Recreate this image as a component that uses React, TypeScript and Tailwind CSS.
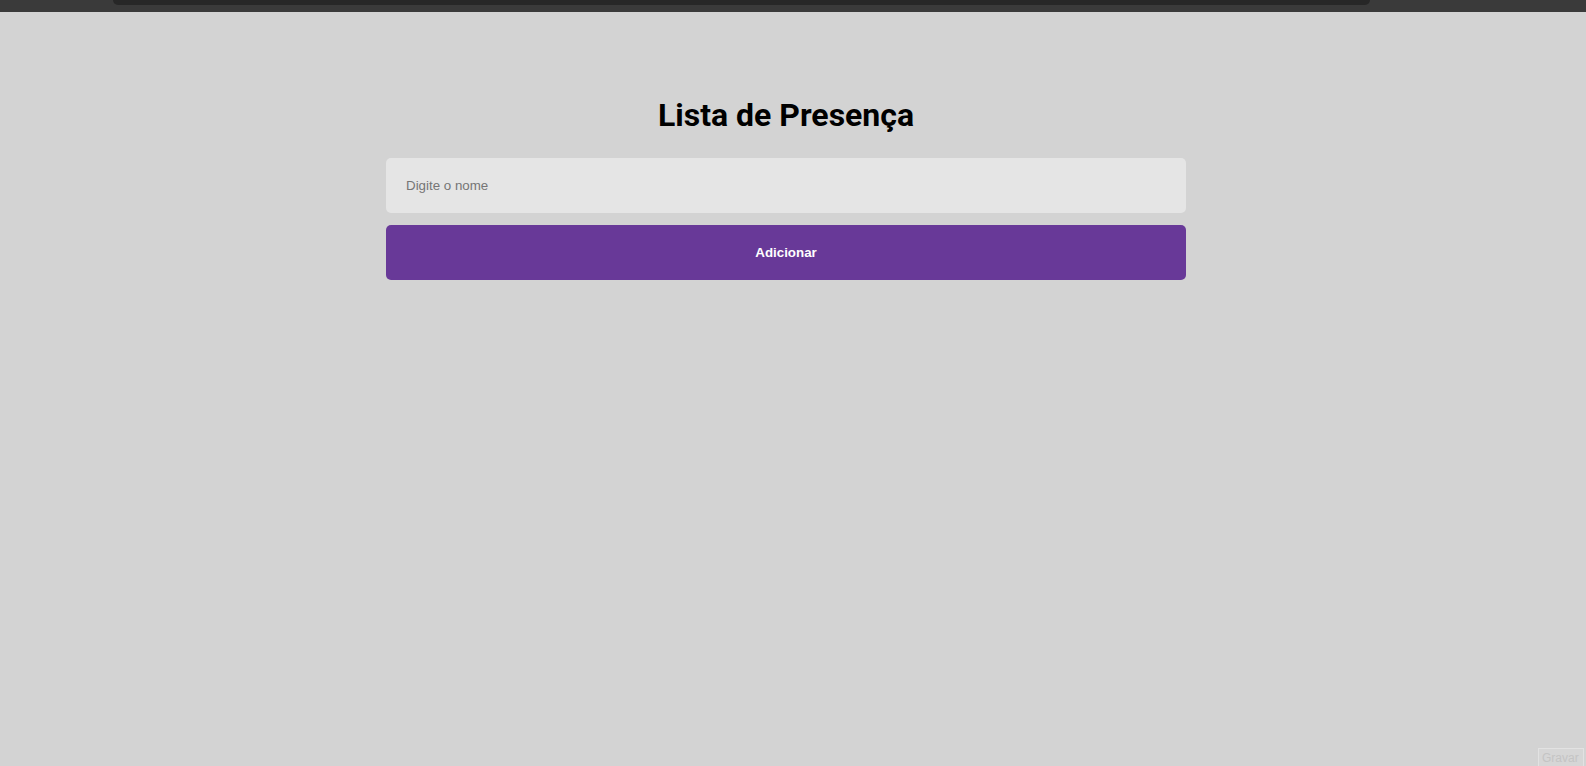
import { useState } from "react";

export default function App() {
  const [nome, setNome] = useState("");
  const [lista, setLista] = useState<string[]>([]);

  const adicionar = () => {
    if (!nome.trim()) return;
    setLista([...lista, nome.trim()]);
    setNome("");
  };

  return (
    <div className="relative min-h-screen bg-[#d3d3d3] font-['Liberation_Sans',Arial,sans-serif]">
      {/* barra superior escura */}
      <div className="h-[12px] bg-[#3a3a3a] flex">
        <div className="ml-[113px] h-[5px] w-[1257px] bg-[#272727] rounded-b-[8px]" />
      </div>

      <div className="flex justify-center pr-[14px] pt-[84px]">
        <div className="w-[800px] flex flex-col">
          <h1 className="text-center text-[32px] leading-[38px] font-bold text-black font-['Roboto',sans-serif] mb-[24px]">
            Lista de Presença
          </h1>
          <input
            value={nome}
            onChange={(e) => setNome(e.target.value)}
            placeholder="Digite o nome"
            className="h-[55px] w-full rounded-[5px] bg-[#e5e5e5] px-[20px] text-[13.33px] text-black placeholder:text-[#757575] outline-none"
          />
          <button
            onClick={adicionar}
            className="mt-[12px] h-[55px] w-full rounded-[5px] bg-[#683998] text-[13.33px] font-bold text-white"
          >
            Adicionar
          </button>
          <ul className="mt-4">
            {lista.map((item, i) => (
              <li key={i} className="py-1 text-sm">
                {item}
              </li>
            ))}
          </ul>
        </div>
      </div>

      <button className="absolute bottom-0 right-[2px] h-[18px] w-[46px] border border-b-0 border-[#e2e2e2] bg-[#d6d6d6] pl-[3px] text-left text-[12px] leading-[16px] text-[#c4c4c4]">
        Gravar
      </button>
    </div>
  );
}
